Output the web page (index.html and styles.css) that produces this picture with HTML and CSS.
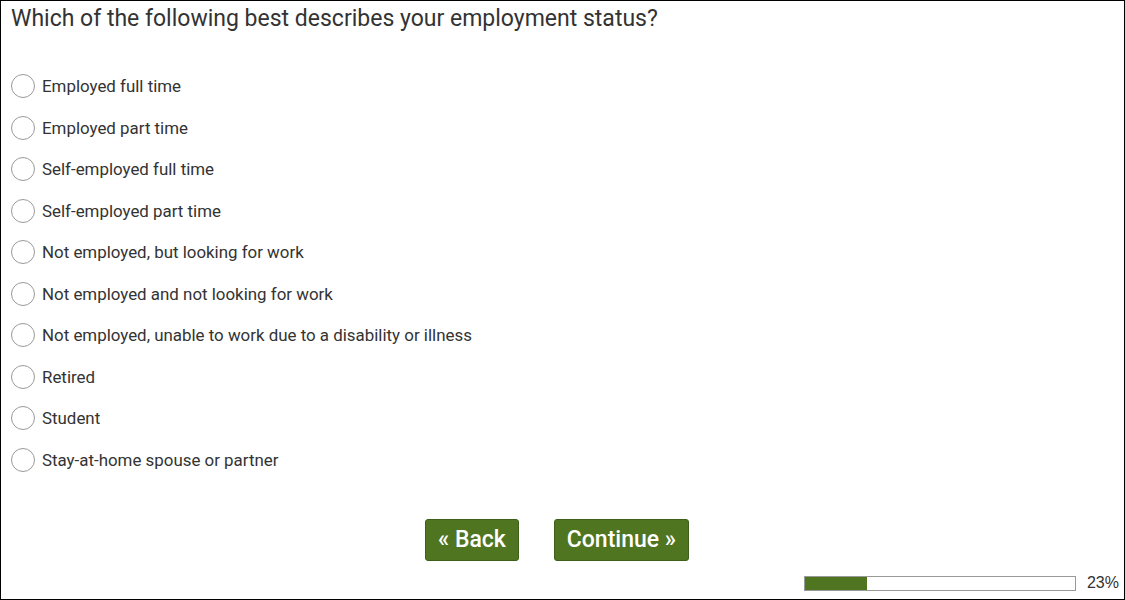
FILE: index.html
```html
<!DOCTYPE html>
<html>
<head>
    <title>Employment status</title>
    <link rel="stylesheet" href="styles.css">
</head>
<body>
    <div class="survey">
        <h1 class="question">Which of the following best describes your employment status?</h1>
        <ul class="options">
            <li><span class="radio"></span>Employed full time</li>
            <li><span class="radio"></span>Employed part time</li>
            <li><span class="radio"></span>Self-employed full time</li>
            <li><span class="radio"></span>Self-employed part time</li>
            <li><span class="radio"></span>Not employed, but looking for work</li>
            <li><span class="radio"></span>Not employed and not looking for work</li>
            <li><span class="radio"></span>Not employed, unable to work due to a disability or illness</li>
            <li><span class="radio"></span>Retired</li>
            <li><span class="radio"></span>Student</li>
            <li><span class="radio"></span>Stay-at-home spouse or partner</li>
        </ul>
        <div class="nav">
            <button class="btn">&laquo; Back</button>
            <button class="btn">Continue &raquo;</button>
        </div>
        <div class="progress">
            <div class="bar"><div class="fill" style="width: 23%"></div></div>
            <span class="percent">23%</span>
        </div>
    </div>
</body>
</html>
```

FILE: styles.css
```css
body {
    margin: 0;
    padding: 0;
    background-color: #fff;
    font-family: 'Roboto', sans-serif;
    color: #333;
}

.survey {
    box-sizing: border-box;
    width: 1125px;
    height: 600px;
    border: 1px solid #000;
    padding: 3px 10px 0 10px;
    display: flex;
    flex-direction: column;
}

.question {
    margin: 0;
    font-size: 23px;
    font-weight: normal;
    line-height: 30px;
}

.options {
    list-style: none;
    margin: 31.5px 0 0 0;
    padding: 0;
}

.options li {
    display: flex;
    align-items: center;
    height: 41.5px;
    font-size: 16.9px;
}

.radio {
    box-sizing: border-box;
    width: 24px;
    height: 24px;
    border: 1px solid #9a9a9a;
    border-radius: 50%;
    margin-right: 7px;
}

.nav {
    display: flex;
    justify-content: center;
    gap: 35px;
    margin-top: 38px;
    padding-right: 11px;
}

.btn {
    height: 42px;
    padding: 0 12px;
    background-color: #4f7521;
    color: #fff;
    border: 1px solid #3f5e1a;
    border-radius: 3px;
    font-family: 'Roboto', sans-serif;
    font-size: 23px;
    font-weight: 500;
    cursor: pointer;
}

.progress {
    display: flex;
    align-items: center;
    justify-content: flex-end;
    margin-top: auto;
    margin-bottom: 7px;
    margin-right: -5px;
}

.bar {
    box-sizing: border-box;
    width: 272px;
    height: 15px;
    border: 1px solid #999;
}

.fill {
    height: 100%;
    background-color: #4f7521;
}

.percent {
    margin-left: 11px;
    font-family: 'Liberation Sans', Arial, sans-serif;
    font-size: 16px;
}
```
